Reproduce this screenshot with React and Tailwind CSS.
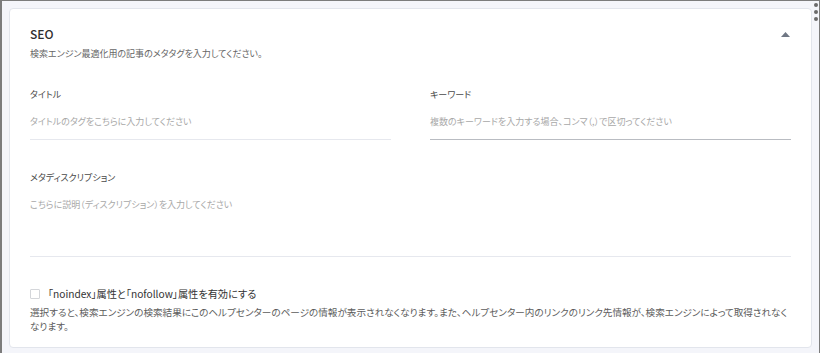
import React from 'react';

const jp = "font-['Noto_Sans_CJK_JP','Noto_Sans',sans-serif] [font-feature-settings:'palt']";

function Field({ label, placeholder, strong }) {
  return (
    <div className="flex flex-col">
      <div className="text-[9px] leading-[14px] text-[#4a4a4a] h-[14px]">{label}</div>
      <div className="mt-[14px] text-[9px] leading-[12px] text-[#a8a8a8] h-[12px]">{placeholder}</div>
      <div className={`mt-[11px] h-px ${strong ? 'bg-[#b9bcc2]' : 'bg-[#e6e8ee]'}`}></div>
    </div>
  );
}

export default function App() {
  return (
    <div className={`w-[820px] h-[353px] overflow-hidden border-l-2 border-t border-r border-[#7c7c7c] bg-[#f4f5fa] flex ${jp}`}>
      <div className="ml-[7px] mt-[7px] w-[803px] h-[340px] bg-white border border-[#e2e5ec] rounded-[4px] px-[20px] pt-[17px]">
        <div className="flex items-start justify-between">
          <div>
            <div className="text-[12px] leading-[16px] font-medium text-[#2f2f2f]">SEO</div>
            <div className="mt-[6px] text-[9px] leading-[12px] text-[#666]">検索エンジン最適化用の記事のメタタグを入力してください。</div>
          </div>
          <svg width="9" height="5" viewBox="0 0 9 5" className="mt-[6px] mr-[1px]">
            <path d="M0 5 L4.5 0 L9 5 Z" fill="#6f7784" />
          </svg>
        </div>

        <div className="mt-[28px] grid grid-cols-2 gap-x-[39px]">
          <Field label="タイトル" placeholder="タイトルのタグをこちらに入力してください" />
          <Field label="キーワード" placeholder="複数のキーワードを入力する場合、コンマ（,）で区切ってください" strong />
        </div>

        <div className="mt-[31px] flex flex-col">
          <div className="text-[9px] leading-[14px] text-[#4a4a4a] h-[14px]">メタディスクリプション</div>
          <div className="mt-[14px] text-[9px] leading-[12px] text-[#a8a8a8] h-[12px]">こちらに説明（ディスクリプション）を入力してください</div>
          <div className="mt-[45px] h-px bg-[#e6e8ee]"></div>
        </div>

        <div className="mt-[30px] flex items-center gap-[8px]">
          <span className="w-[10px] h-[10px] border border-[#d4d6da] rounded-[1px] bg-white"></span>
          <span className="text-[10.2px] leading-[14px] text-[#333]">「noindex」属性と「nofollow」属性を有効にする</span>
        </div>
        <div className="mt-[4px] text-[9.6px] leading-[14px] text-[#5c5c5c] whitespace-nowrap">
          選択すると、検索エンジンの検索結果にこのヘルプセンターのページの情報が表示されなくなります。また、ヘルプセンター内のリンクのリンク先情報が、検索エンジンによって取得されなく<br />なります。
        </div>
      </div>
      <div className="flex-1 flex flex-col items-center pt-[2px] gap-[3px] pl-[1px]">
        <span className="w-[4px] h-[4px] rounded-full bg-[#6a6a6a]"></span>
        <span className="w-[4px] h-[4px] rounded-full bg-[#6a6a6a]"></span>
        <span className="w-[4px] h-[4px] rounded-full bg-[#6a6a6a]"></span>
      </div>
    </div>
  );
}
